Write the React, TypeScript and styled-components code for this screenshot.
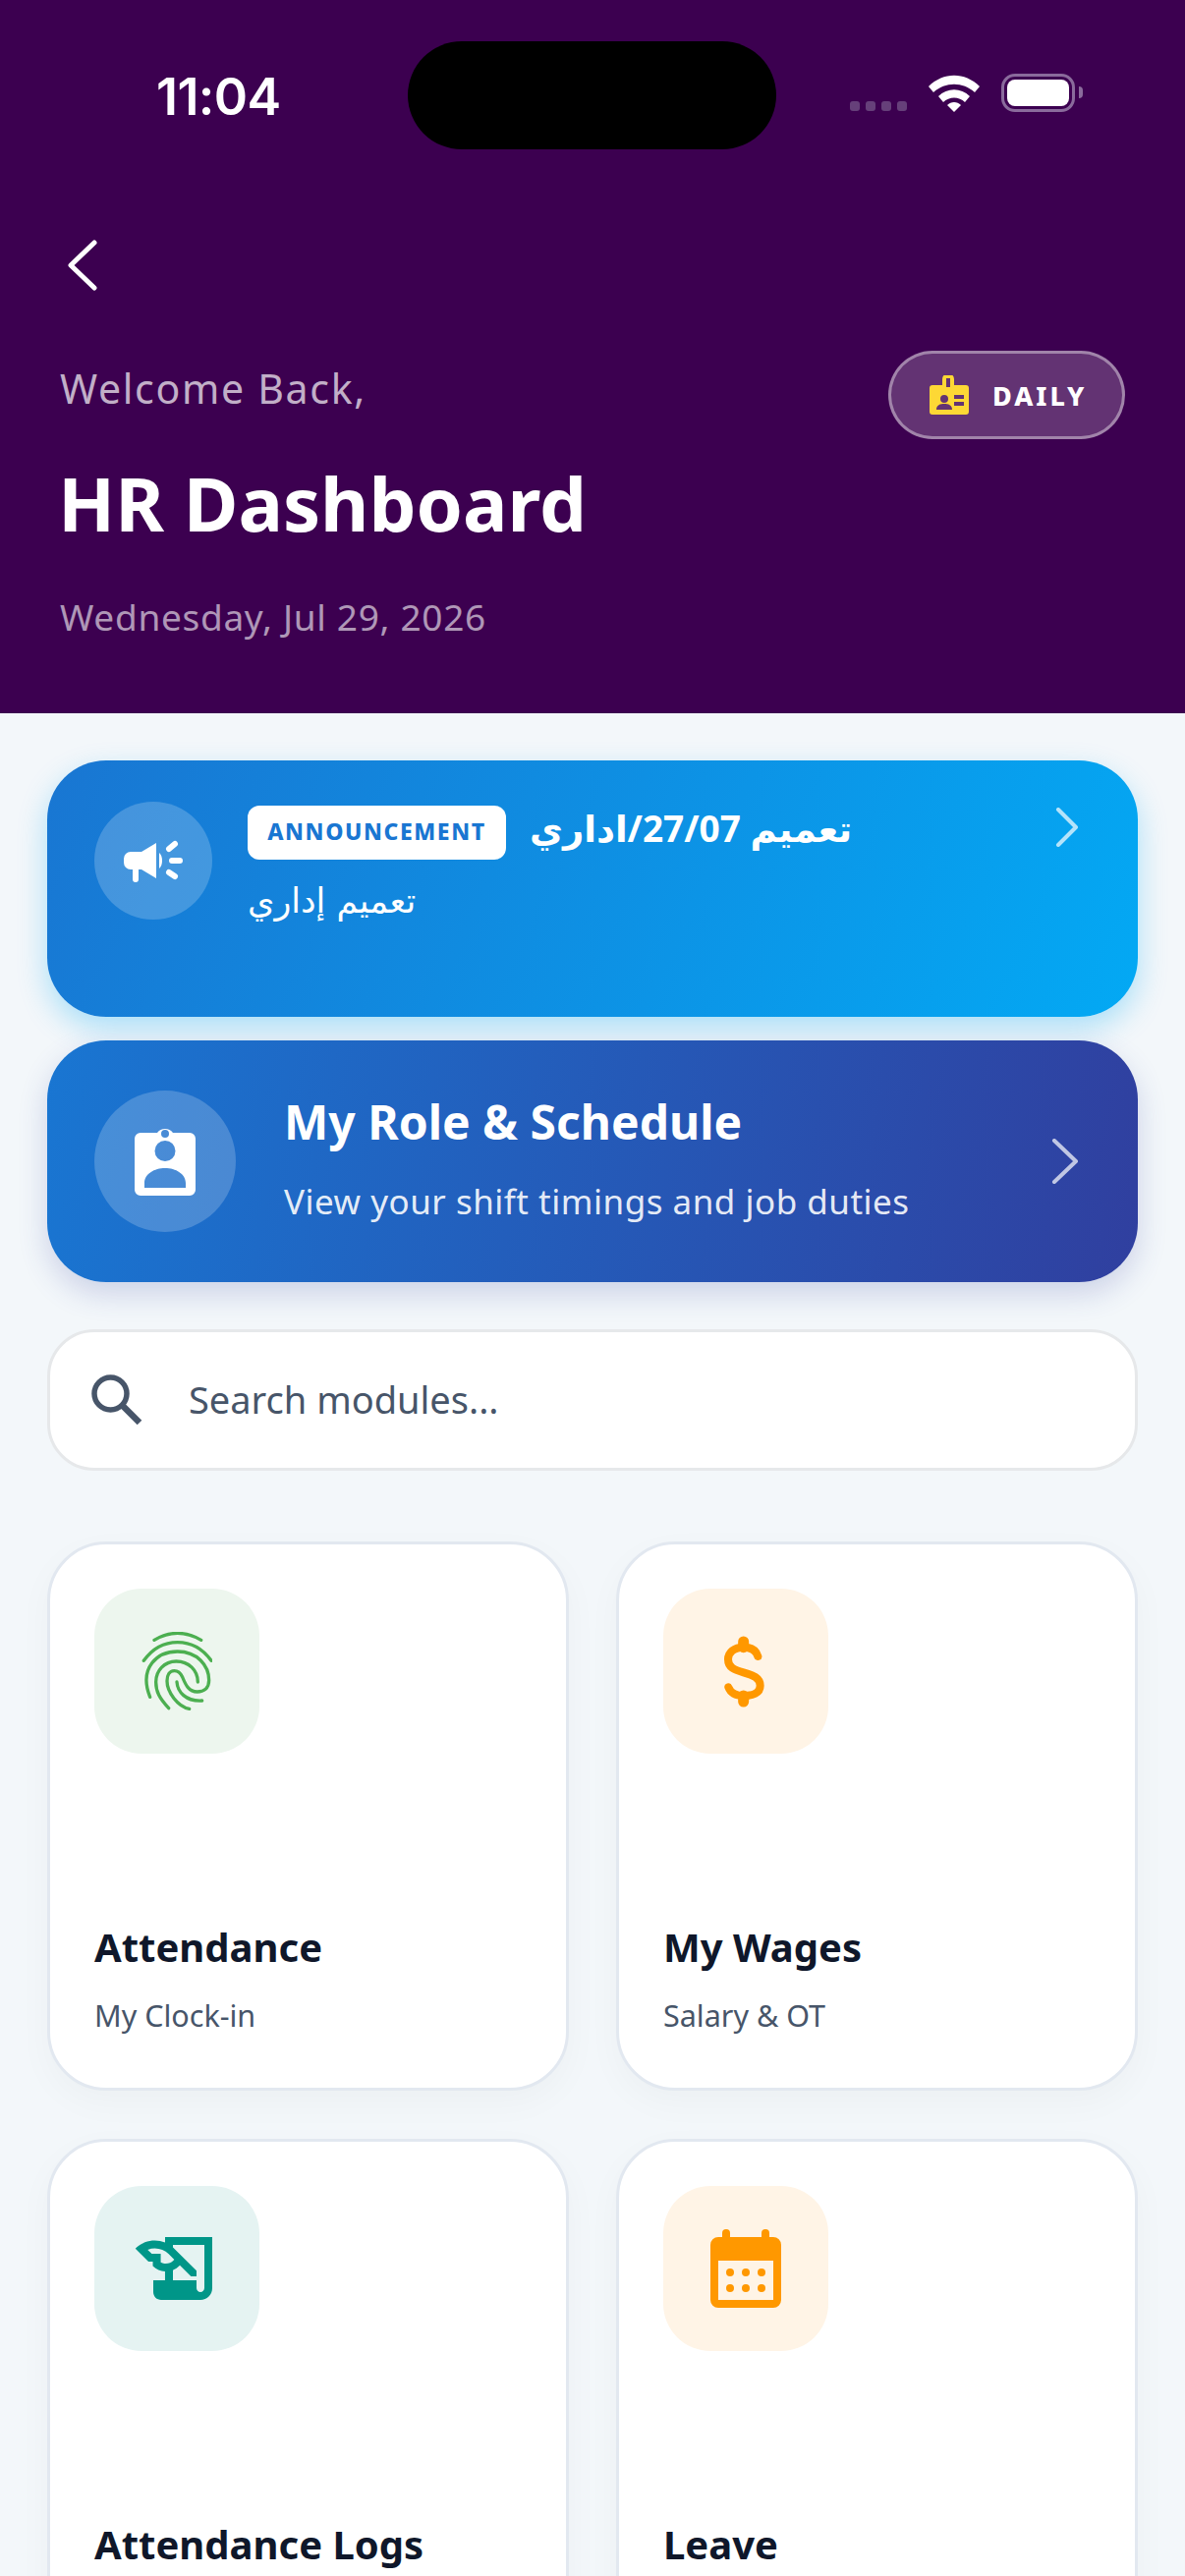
import styled, { createGlobalStyle } from 'styled-components';
import { MdHistoryEdu } from 'react-icons/md';

const GlobalStyle = createGlobalStyle`
    html, body {
        margin: 0;
        padding: 0;
        background: #f3f7fa;
    }
    body {
        width: 1206px;
        height: 2622px;
        overflow: hidden;
        font-family: 'Noto Sans', 'DejaVu Sans', sans-serif;
    }
    * {
        box-sizing: border-box;
    }
`;

const Screen = styled.div`
    width: 1206px;
    height: 2622px;
    overflow: hidden;
    background: #f3f7fa;
`;

const Header = styled.header`
    height: 726px;
    background: #3c0050;
    padding: 42px 61px 0;
`;

const StatusBar = styled.div`
    height: 110px;
    display: grid;
    grid-template-columns: 354px 375px 1fr;
    align-items: center;
`;

const Clock = styled.div`
    padding-left: 98px;
    margin-top: 2px;
    color: #fff;
    font-family: 'Inter', sans-serif;
    font-size: 52px;
    font-weight: 600;
    letter-spacing: -0.6px;
`;

const Island = styled.div`
    height: 110px;
    border-radius: 55px;
    background: #000;
`;

const StatusIcons = styled.div`
    display: flex;
    align-items: flex-start;
    margin: -5px 0 0 75px;
`;

const SignalDots = styled.div`
    display: flex;
    gap: 6px;
    margin: 28px 0 0;
`;

const SignalDot = styled.span`
    width: 10px;
    height: 10px;
    border-radius: 3px;
    background: #66407a;
`;

const WifiIcon = styled.svg`
    width: 52px;
    height: 38px;
    margin: 1px 0 0 22px;
`;

const Battery = styled.div`
    width: 75px;
    height: 39px;
    margin-left: 22px;
    padding: 3px;
    border: 3px solid #8a6b9c;
    border-radius: 14px;
    position: relative;
    &::after {
        content: '';
        position: absolute;
        right: -11px;
        top: 10px;
        width: 4px;
        height: 12px;
        border-radius: 0 4px 4px 0;
        background: #8a6b9c;
    }
`;

const BatteryFill = styled.div`
    height: 100%;
    border-radius: 8px;
    background: #fff;
`;

const BackRow = styled.div`
    height: 52px;
    margin: 92px 0 0 8px;
`;

const HeadingRow = styled.div`
    display: flex;
    justify-content: space-between;
    align-items: flex-start;
    margin-top: 69px;
`;

const Welcome = styled.div`
    color: rgba(255, 255, 255, 0.7);
    font-size: 41px;
    line-height: 60px;
    letter-spacing: 1.7px;
`;

const Title = styled.h1`
    margin: 39px 0 0 -2px;
    color: #fff;
    font-size: 76px;
    line-height: 96px;
    font-weight: 700;
`;

const DateLine = styled.div`
    margin-top: 43px;
    color: rgba(255, 255, 255, 0.6);
    font-size: 37px;
    line-height: 50px;
    letter-spacing: 0.7px;
`;

const ShiftPill = styled.div`
    width: 241px;
    height: 90px;
    margin-top: -8px;
    border: 3px solid rgba(255, 255, 255, 0.4);
    border-radius: 45px;
    background: rgba(255, 255, 255, 0.2);
    display: flex;
    align-items: center;
    padding-left: 39px;
    gap: 24px;
    color: #fff;
    font-size: 27px;
    font-weight: 800;
    letter-spacing: 3px;
`;

const Content = styled.main`
    padding: 48px 48px 0;
`;

const BannerCard = styled.div<{ $from: string; $to: string; $angle: number; $glow: string; $height: number }>`
    height: ${props => props.$height}px;
    border-radius: 60px;
    background: linear-gradient(${props => props.$angle}deg, ${props => props.$from}, ${props => props.$to});
    box-shadow: 0 12px 30px ${props => props.$glow};
    color: #fff;
    display: flex;
    padding: 0 60px 0 48px;
`;

const AnnouncementCard = styled(BannerCard)`
    align-items: flex-start;
    padding-top: 42px;
    margin-bottom: 24px;
`;

const RoleCard = styled(BannerCard)`
    align-items: center;
    margin-bottom: 48px;
`;

const IconCircle = styled.div<{ $size: number }>`
    width: ${props => props.$size}px;
    height: ${props => props.$size}px;
    flex: none;
    border-radius: 50%;
    background: rgba(255, 255, 255, 0.2);
    display: flex;
    align-items: center;
    justify-content: center;
`;

const AnnouncementBody = styled.div`
    flex: 1;
    margin-left: 36px;
`;

const AnnouncementTop = styled.div`
    display: flex;
    align-items: center;
    gap: 24px;
    height: 55px;
    margin-top: 4px;
`;

const Tag = styled.span`
    height: 55px;
    width: 263px;
    padding-bottom: 4px;
    border-radius: 12px;
    background: #fff;
    color: #1976d2;
    font-size: 23px;
    font-weight: 800;
    letter-spacing: 1.6px;
    display: flex;
    align-items: center;
    justify-content: center;
`;

const ArabicTitle = styled.span`
    margin-bottom: 10px;
    font-family: 'Noto Sans', 'DejaVu Sans', sans-serif;
    font-size: 37px;
    font-weight: 700;
    line-height: 55px;
`;

const ArabicSub = styled.div`
    margin-top: 17px;
    font-family: 'DejaVu Sans', sans-serif;
    font-size: 35px;
    line-height: 50px;
`;

const Chevron = styled.svg<{ $top: number }>`
    flex: none;
    margin-top: ${props => props.$top}px;
`;

const RoleBody = styled.div`
    flex: 1;
    margin-left: 49px;
`;

const RoleTitle = styled.div`
    font-size: 48px;
    font-weight: 700;
    line-height: 66px;
`;

const RoleSub = styled.div`
    margin: 24px 0 8px;
    font-size: 35px;
    line-height: 48px;
    letter-spacing: 0.5px;
    color: rgba(255, 255, 255, 0.9);
`;

const SearchBox = styled.div`
    height: 144px;
    border: 3px solid #e6e8ea;
    border-radius: 48px;
    background: #fff;
    display: flex;
    align-items: center;
    padding-left: 42px;
    gap: 47px;
    margin-bottom: 72px;
`;

const SearchText = styled.span`
    padding-bottom: 3px;
    color: #475569;
    font-size: 38px;
`;

const ModuleGrid = styled.div`
    display: grid;
    grid-template-columns: 531px 531px;
    justify-content: space-between;
    row-gap: 49px;
`;

const ModuleCard = styled.div`
    height: 559px;
    padding: 45px;
    border: 3px solid #e2e8f0;
    border-radius: 60px;
    background: #fff;
    box-shadow: 0 12px 36px rgba(15, 23, 42, 0.03);
`;

const ModuleIcon = styled.div<{ $bg: string }>`
    width: 168px;
    height: 168px;
    border-radius: 48px;
    background: ${props => props.$bg};
    display: flex;
    align-items: center;
    justify-content: center;
`;

const ModuleTitle = styled.div`
    margin-top: 169px;
    color: #0f172a;
    font-size: 40px;
    font-weight: 700;
    line-height: 56px;
`;

const ModuleSub = styled.div`
    margin-top: 21px;
    color: #475569;
    font-size: 30.5px;
    line-height: 40px;
`;

const FingerprintIcon = () => (
    <svg width='72' height='80' viewBox='250 212 216 240' fill='none' stroke='#4caf50' strokeWidth='10' strokeLinecap='round'>
        <path d='M289 237C335 210 385 210 432 237' />
        <path d='M257 300C310 225 410 225 463 300' />
        <path d='M276 411C240 320 300 272 360 272C420 272 456 315 456 360C456 385 440 395 420 395C395 395 385 375 375 350C368 335 360 331 350 331C335 331 328 345 328 362C328 395 360 440 396 447' />
        <path d='M333 445C305 415 294 395 294 365C294 330 320 302 356 302C395 302 422 330 422 365' />
        <path d='M358 365C360 395 385 425 435 422' />
    </svg>
);

const CalendarIcon = () => (
    <svg width='72' height='80' viewBox='0 0 72 80' fill='#ff9800'>
        <rect x='12' y='0' width='8' height='16' rx='4' />
        <rect x='52' y='0' width='8' height='16' rx='4' />
        <path fillRule='evenodd' d='M8 8H64A8 8 0 0 1 72 16V72A8 8 0 0 1 64 80H8A8 8 0 0 1 0 72V16A8 8 0 0 1 8 8ZM8 32V72H64V32Z' />
        <circle cx='20' cy='44' r='4' /><circle cx='36' cy='44' r='4' /><circle cx='52' cy='44' r='4' />
        <circle cx='20' cy='60' r='4' /><circle cx='36' cy='60' r='4' /><circle cx='52' cy='60' r='4' />
    </svg>
);

const DollarIcon = () => (
    <svg width='44' height='75' viewBox='231 190 132 225' fill='none' stroke='#ff9800' strokeLinecap='round' strokeLinejoin='round'>
        <path strokeWidth='24' d='M334 256C328 236 310 228 290 228C262 228 243 243 243 265C243 290 262 297 290 305C320 313 341 322 341 345C341 368 318 376 290 376C268 376 251 368 244 350' />
        <path strokeWidth='33' d='M290 211V228M290 376V394' />
    </svg>
);

const MegaphoneIcon = () => (
    <svg width='60' height='44' viewBox='0 0 60 44'>
        <path fill='#fff' d='M7 13H18L33 4V40L18 31H15V41A3 3 0 0 1 9 41V31H7A7 7 0 0 1 0 24V20A7 7 0 0 1 7 13Z' />
        <path fill='#fff' d='M36 14C40 17 40 27 36 30Z' />
        <path stroke='#fff' strokeWidth='6' strokeLinecap='round' d='M46 10L52 5M49 22H57M46 34L52 38' />
    </svg>
);

const BadgeIcon = () => (
    <svg width='64' height='72' viewBox='0 0 64 72'>
        <path fill='#fff' fillRule='evenodd' d='M24 7A10 10 0 0 1 40 7H57A6 6 0 0 1 63 13V65A6 6 0 0 1 57 71H7A6 6 0 0 1 1 65V13A6 6 0 0 1 7 7ZM32 4A4 4 0 1 0 32.01 12A4 4 0 0 0 32 4ZM32 15A10.500 10.500 0 1 0 32.010 36A10.500 10.500 0 0 0 32 15ZM11 63H53V58C53 49 43 43 32 43C21 43 11 49 11 58Z' />
    </svg>
);

const ShiftBadgeIcon = () => (
    <svg width='40' height='40' viewBox='0 0 40 40'>
        <path fill='#fdd835' fillRule='evenodd' d='M13 10V4A6 6 0 0 1 25 4V10H37A3 3 0 0 1 40 13V37A3 3 0 0 1 37 40H3A3 3 0 0 1 0 37V13A3 3 0 0 1 3 10ZM17 3V12H21V3ZM15 20A4 4 0 1 0 15.010 28A4 4 0 0 0 15 20ZM7 35H23C23 30 19 29 15 29C11 29 7 30 7 35ZM25 20V24H35V20ZM25 27V31H35V27Z' />
    </svg>
);

const modules = [
    { title: 'Attendance', sub: 'My Clock-in', bg: '#edf6ee', icon: <FingerprintIcon /> },
    { title: 'My Wages', sub: 'Salary & OT', bg: '#fff4e6', icon: <DollarIcon /> },
    { title: 'Attendance Logs', bg: '#e5f3f2', icon: <MdHistoryEdu size={96} color='#009688' /> },
    { title: 'Leave', bg: '#fff4e6', icon: <CalendarIcon /> },
];

const App = () => (
    <Screen>
        <GlobalStyle />
        <Header>
            <StatusBar>
                <Clock>11:04</Clock>
                <Island />
                <StatusIcons>
                    <SignalDots>
                        <SignalDot />
                        <SignalDot />
                        <SignalDot />
                        <SignalDot />
                    </SignalDots>
                    <WifiIcon viewBox='0 0 52 38' fill='#fff'>
                        <path d='M0 12C15 -3 37 -3 52 12L47 18C35 7 17 7 5 18Z' />
                        <path d='M10 22C19 13 33 13 42 22L37 28C31 22 21 22 15 28Z' />
                        <path d='M19 31C23 27 29 27 33 31L26 38Z' />
                    </WifiIcon>
                    <Battery>
                        <BatteryFill />
                    </Battery>
                </StatusIcons>
            </StatusBar>
            <BackRow>
                <svg width='30' height='52' viewBox='0 0 30 52' fill='none' stroke='#fff' strokeWidth='5' strokeLinecap='round' strokeLinejoin='round'>
                    <path d='M27 3L3 26L27 49' />
                </svg>
            </BackRow>
            <HeadingRow>
                <div>
                    <Welcome>Welcome Back,</Welcome>
                    <Title>HR Dashboard</Title>
                    <DateLine>Wednesday, Jul 29, 2026</DateLine>
                </div>
                <ShiftPill>
                    <ShiftBadgeIcon />
                    DAILY
                </ShiftPill>
            </HeadingRow>
        </Header>
        <Content>
            <AnnouncementCard $from='#1976d2' $to='#03a9f4' $angle={115} $glow='rgba(3, 169, 244, 0.3)' $height={261}>
                <IconCircle $size={120}>
                    <MegaphoneIcon />
                </IconCircle>
                <AnnouncementBody>
                    <AnnouncementTop>
                        <Tag>ANNOUNCEMENT</Tag>
                        <ArabicTitle>تعميم 27/07/اداري</ArabicTitle>
                    </AnnouncementTop>
                    <ArabicSub>تعميم إداري</ArabicSub>
                </AnnouncementBody>
                <Chevron $top={6} width='24' height='40' viewBox='0 0 24 40' fill='none' stroke='rgba(255,255,255,0.7)' strokeWidth='4' strokeLinecap='round' strokeLinejoin='round'>
                    <path d='M3 2L21 20L3 38' />
                </Chevron>
            </AnnouncementCard>
            <RoleCard $from='#1976d2' $to='#303f9f' $angle={100} $glow='rgba(48, 63, 159, 0.2)' $height={246}>
                <IconCircle $size={144}>
                    <BadgeIcon />
                </IconCircle>
                <RoleBody>
                    <RoleTitle>My Role &amp; Schedule</RoleTitle>
                    <RoleSub>View your shift timings and job duties</RoleSub>
                </RoleBody>
                <Chevron $top={0} width='28' height='46' viewBox='0 0 28 46' fill='none' stroke='rgba(255,255,255,0.7)' strokeWidth='4' strokeLinecap='round' strokeLinejoin='round'>
                    <path d='M3 2L25 23L3 44' />
                </Chevron>
            </RoleCard>
            <SearchBox>
                <svg width='52' height='52' viewBox='0 0 52 52' fill='none' stroke='#475569' strokeWidth='5.500'>
                    <circle cx='19.500' cy='19.500' r='16.500' />
                    <path d='M32 32L49 49' strokeWidth='6.500' />
                </svg>
                <SearchText>Search modules...</SearchText>
            </SearchBox>
            <ModuleGrid>
                {modules.map(item => (
                    <ModuleCard key={item.title}>
                        <ModuleIcon $bg={item.bg}>{item.icon}</ModuleIcon>
                        <ModuleTitle>{item.title}</ModuleTitle>
                        {item.sub && <ModuleSub>{item.sub}</ModuleSub>}
                    </ModuleCard>
                ))}
            </ModuleGrid>
        </Content>
    </Screen>
);

export default App;
